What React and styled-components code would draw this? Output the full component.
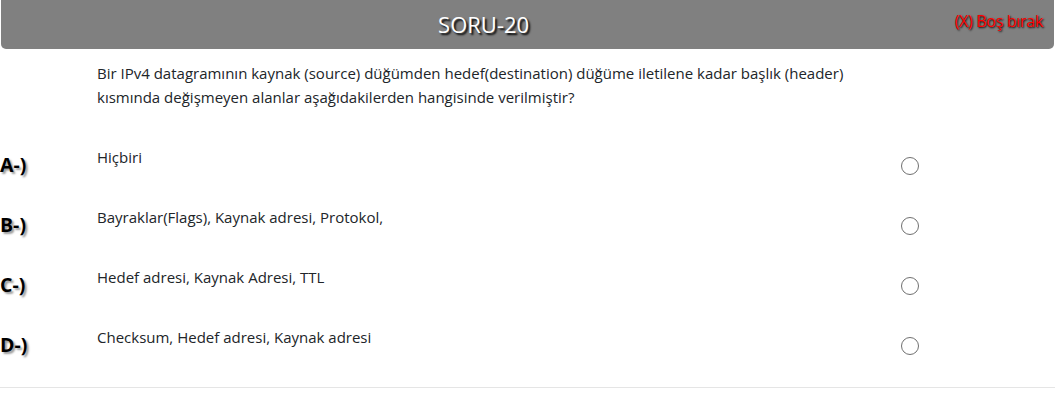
import styled, { createGlobalStyle } from "styled-components";

const GlobalStyle = createGlobalStyle`
  body {
    margin: 0;
    background: #fff;
    font-family: "Open Sans", "Noto Sans", sans-serif;
  }
`;

const options = [
  { key: "A", text: "Hiçbiri" },
  { key: "B", text: "Bayraklar(Flags), Kaynak adresi, Protokol," },
  { key: "C", text: "Hedef adresi, Kaynak Adresi, TTL" },
  { key: "D", text: "Checksum, Hedef adresi, Kaynak adresi" },
];

export default function App() {
  return (
    <>
      <GlobalStyle />
      <Page>
        <Header>
          <Title>SORU-20</Title>
          <SkipLink>
            <span>(X) Boş bırak</span>
          </SkipLink>
        </Header>
        <Question>
          Bir IPv4 datagramının kaynak (source) düğümden hedef(destination) düğüme iletilene kadar başlık (header)
          <br />
          kısmında değişmeyen alanlar aşağıdakilerden hangisinde verilmiştir?
        </Question>
        <Options>
          {options.map((o) => (
            <OptionRow key={o.key}>
              <Letter>{o.key}-)</Letter>
              <OptionText>{o.text}</OptionText>
              <RadioCell>
                <Radio />
              </RadioCell>
            </OptionRow>
          ))}
        </Options>
        <Divider />
      </Page>
    </>
  );
}

const Page = styled.div`
  width: 1055px;
  color: #212529;
`;

const Header = styled.div`
  margin: 0 1px;
  height: 49px;
  background-color: #808080;
  border-radius: 0 0 5px 5px;
  display: grid;
  grid-template-columns: minmax(0, 11fr) minmax(0, 1fr);
  align-items: start;
`;

const Title = styled.div`
  text-align: center;
  color: #fff;
  font-size: 22px;
  line-height: 49px;
  text-shadow: 2px 2px 2px #000;
`;

const SkipLink = styled.div`
  min-width: 0;
  display: flex;
  justify-content: flex-end;
  padding: 10px 11px 0 0;
  font-size: 16px;
  color: #ff0000;
  white-space: nowrap;
  letter-spacing: -0.3px;
  text-shadow: 1px 1px 2px #000;
  cursor: pointer;
`;

const Question = styled.div`
  padding: 12px 0 0 97px;
  font-size: 15px;
  line-height: 24px;
`;

const Options = styled.div`
  padding-top: 33px;
`;

const OptionRow = styled.div`
  display: grid;
  grid-template-columns: 97px 1fr 154px;
  height: 60px;
`;

const Letter = styled.div`
  padding-top: 9px;
  font-size: 19.5px;
  font-weight: bold;
  color: #000;
  text-shadow: 2px 2px 2px rgba(0, 0, 0, 0.4);
`;

const OptionText = styled.div`
  padding-top: 3px;
  font-size: 15px;
  line-height: 24px;
`;

const RadioCell = styled.div`
  padding-top: 15px;
`;

const Radio = styled.span`
  display: block;
  width: 16px;
  height: 16px;
  border: 1.5px solid #707070;
  border-radius: 50%;
`;

const Divider = styled.hr`
  margin: 5px 0 0;
  border: none;
  border-top: 1px solid #e5e5e5;
`;
